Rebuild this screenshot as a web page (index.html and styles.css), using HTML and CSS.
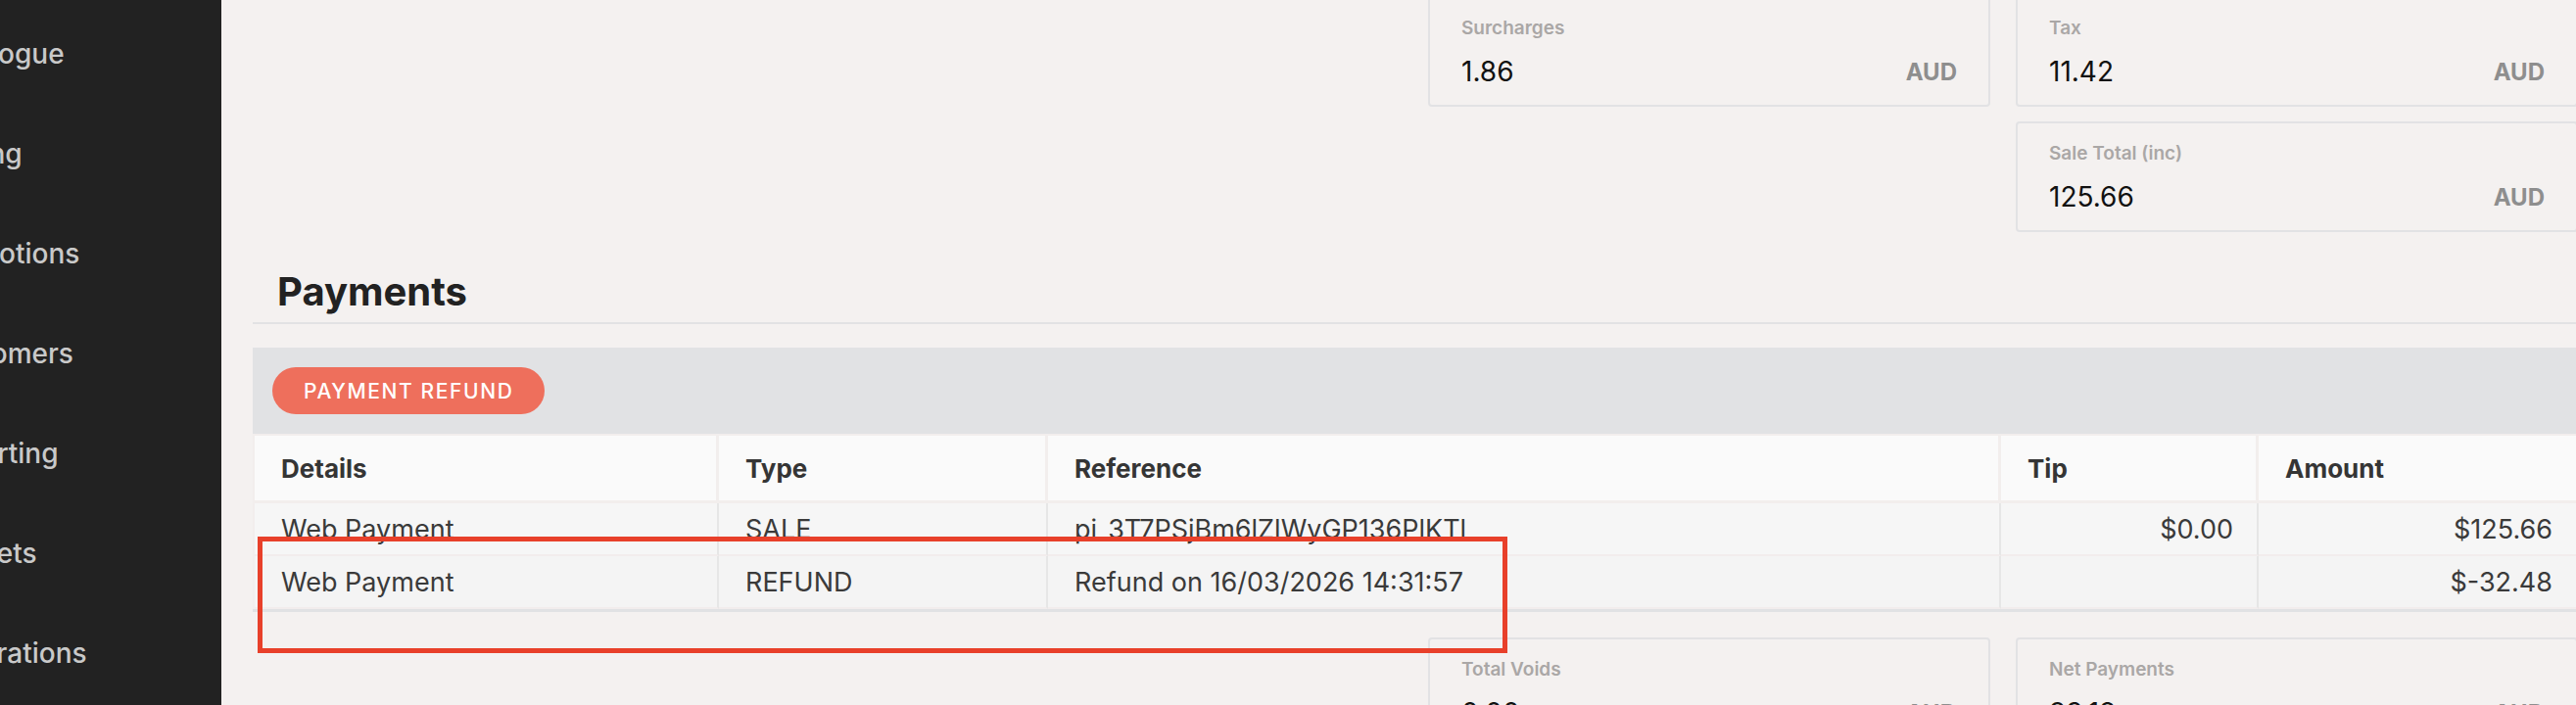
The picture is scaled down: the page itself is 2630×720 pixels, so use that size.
FILE: index.html
```html
<!DOCTYPE html>
<html lang="en">
<head>
<meta charset="utf-8">
<title>Sale detail</title>
<link rel="stylesheet" href="styles.css">
</head>
<body>
<div class="app">
  <aside class="sidebar">
    <ul class="nav">
      <li class="nav-item">Catalogue</li>
      <li class="nav-item">Pricing</li>
      <li class="nav-item">Promotions</li>
      <li class="nav-item">Customers</li>
      <li class="nav-item">Reporting</li>
      <li class="nav-item">Markets</li>
      <li class="nav-item">Integrations</li>
    </ul>
  </aside>
  <main class="main">
    <div class="content">
      <div class="stat-grid stat-grid-top">
        <div class="stat-card col-3">
          <div class="stat-label">Surcharges</div>
          <div class="stat-row"><span class="stat-value">1.86</span><span class="stat-unit">AUD</span></div>
        </div>
        <div class="stat-card col-4">
          <div class="stat-label">Tax</div>
          <div class="stat-row"><span class="stat-value">11.42</span><span class="stat-unit">AUD</span></div>
        </div>
        <div class="stat-card col-4">
          <div class="stat-label">Sale Total (inc)</div>
          <div class="stat-row"><span class="stat-value">125.66</span><span class="stat-unit">AUD</span></div>
        </div>
      </div>

      <div class="section-head">
        <h2 class="section-title">Payments</h2>
      </div>

      <div class="pay-panel">
        <div class="pay-toolbar">
          <span class="pill">Payment Refund</span>
        </div>
        <table class="pay-table">
          <colgroup>
            <col class="w-details">
            <col class="w-type">
            <col class="w-ref">
            <col class="w-tip">
            <col class="w-amount">
          </colgroup>
          <thead>
            <tr>
              <th>Details</th>
              <th>Type</th>
              <th>Reference</th>
              <th>Tip</th>
              <th>Amount</th>
            </tr>
          </thead>
          <tbody>
            <tr class="row-a">
              <td>Web Payment</td>
              <td>SALE</td>
              <td>pi_3T7PSjBm6lZlWyGP136PlKTl</td>
              <td class="num">$0.00</td>
              <td class="num">$125.66</td>
            </tr>
            <tr class="row-b">
              <td>Web Payment</td>
              <td>REFUND</td>
              <td>Refund on 16/03/2026 14:31:57</td>
              <td class="num"></td>
              <td class="num">$-32.48</td>
            </tr>
          </tbody>
        </table>
      </div>

      <div class="stat-grid stat-grid-bottom">
        <div class="stat-card col-3">
          <div class="stat-label">Total Voids</div>
          <div class="stat-row"><span class="stat-value">0.00</span><span class="stat-unit">AUD</span></div>
        </div>
        <div class="stat-card col-4">
          <div class="stat-label">Net Payments</div>
          <div class="stat-row"><span class="stat-value">93.18</span><span class="stat-unit">AUD</span></div>
        </div>
      </div>
    </div>
    <div class="annotation"></div>
  </main>
</div>
</body>
</html>
```

FILE: styles.css
```css
* { box-sizing: border-box; }

html, body {
  margin: 0;
  padding: 0;
  height: 100%;
  overflow: hidden;
}

body {
  font-family: Inter, "Noto Sans", "DejaVu Sans", sans-serif;
  background: #f4f1f0;
  color: #333;
}

.app {
  display: flex;
  height: 720px;
  width: 2630px;
  overflow: hidden;
}

/* Sidebar */
.sidebar {
  flex: 0 0 226px;
  background: #222222;
  overflow: hidden;
}

.nav {
  list-style: none;
  margin: 0 0 0 -71px;
  padding: 4px 0 0 0;
}

.nav-item {
  height: 102px;
  line-height: 102px;
  font-size: 28px;
  font-weight: 500;
  color: #c9c9c9;
  white-space: nowrap;
}

/* Main */
.main {
  flex: 1 1 auto;
  position: relative;
  overflow: hidden;
  background: #f4f1f0;
}

.content {
  width: 2374px;
  margin: -4px 0 0 32px;
}

.stat-grid {
  display: grid;
  grid-template-columns: repeat(4, 1fr);
  column-gap: 26px;
  row-gap: 15px;
}

.col-3 { grid-column: 3; }
.col-4 { grid-column: 4; }

.stat-card {
  border: 2px solid #e2e2e4;
  border-radius: 4px;
  padding: 18px 32px 17px 32px;
  height: 113px;
}

.stat-label {
  font-size: 19px;
  line-height: 26px;
  font-weight: 600;
  color: #aaa7a6;
}

.stat-row {
  display: flex;
  justify-content: space-between;
  align-items: center;
  margin-top: 14px;
  height: 34px;
}

.stat-value {
  font-size: 28px;
  color: #111;
}

.stat-unit {
  font-size: 24px;
  font-weight: 700;
  color: #8e8e8e;
}

/* Section heading */
.section-head {
  margin-top: 37px;
  padding: 0 0 7px 25px;
  border-bottom: 2px solid #e2e2e4;
}

.section-title {
  margin: 0;
  font-size: 40px;
  line-height: 48px;
  font-weight: 700;
  color: #222;
}

/* Payments panel */
.pay-panel {
  margin-top: 24px;
  background: #e1e2e4;
  padding: 20px 0 3px 0;
}

.pay-toolbar {
  padding-left: 20px;
  margin-bottom: 20px;
}

.pill {
  display: inline-flex;
  align-items: center;
  height: 48px;
  padding: 0 32px;
  border-radius: 24px;
  background: #ee6f5c;
  color: #fff;
  font-size: 21px;
  font-weight: 500;
  letter-spacing: 1.6px;
  text-transform: uppercase;
}

.pay-table {
  width: 100%;
  table-layout: fixed;
  border-collapse: separate;
  border-spacing: 0;
  border: 2px solid #f2eeed;
  border-bottom: 0;
}

.w-details { width: 474px; }
.w-type { width: 336px; }
.w-ref { width: 973px; }
.w-tip { width: 263px; }
.w-amount { width: auto; }

.pay-table th {
  height: 69px;
  padding: 0 26px 0 27px;
  background: #fafafa;
  border-right: 3px solid #f2eeed;
  border-bottom: 3px solid #f2eeed;
  text-align: left;
  font-size: 26px;
  font-weight: 700;
  color: #353535;
}

.pay-table th:last-child { border-right: 0; }

.pay-table td {
  height: 54px;
  padding: 0 24px 0 27px;
  border-right: 2px solid #e6e6e6;
  border-bottom: 2px solid #f2eded;
  font-size: 27px;
  color: #3a3a3a;
  white-space: nowrap;
  overflow: hidden;
}

.pay-table td:last-child { border-right: 0; }

.row-a td { background: #f6f6f6; }
.row-b td { background: #f4f4f4; }

.pay-table td.num { text-align: right; }

/* Bottom stats */
.stat-grid-bottom {
  margin-top: 26px;
}

/* Annotation overlay */
.annotation {
  position: absolute;
  left: 37px;
  top: 548px;
  width: 1276px;
  height: 119px;
  border: 5px solid #e8402a;
  pointer-events: none;
}
```
